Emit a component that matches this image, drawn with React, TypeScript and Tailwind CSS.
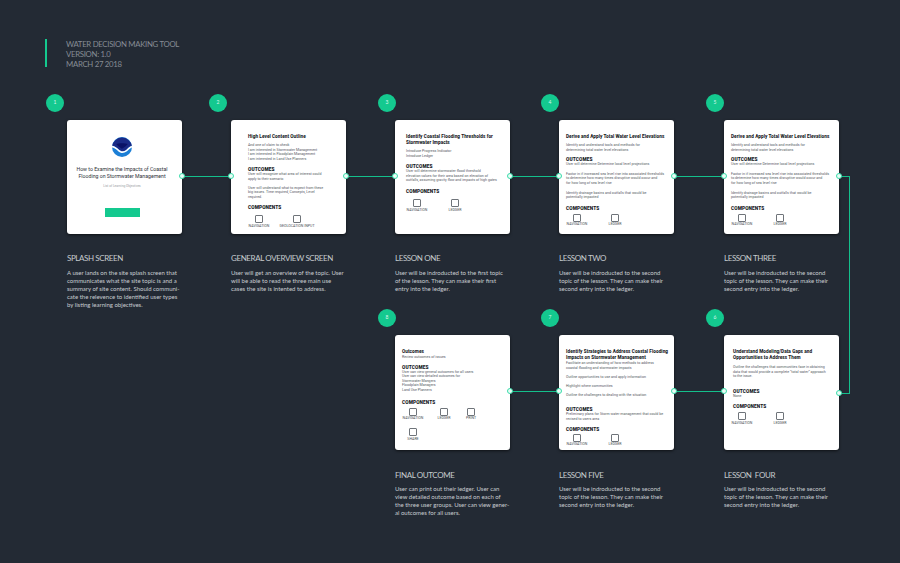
import type { ReactNode } from "react";

const cardFont = { fontFamily: '"Roboto", "Liberation Sans", sans-serif' };

function CardTitle({ children }: { children: ReactNode }) {
  return (
    <h3 className="text-[4.7px] leading-[6px] font-extrabold tracking-[0.05px] whitespace-nowrap text-[#15181d]">
      {children}
    </h3>
  );
}

function CardHead({ children, className = "" }: { children: ReactNode; className?: string }) {
  return (
    <h4 className={`text-[4.8px] leading-[5px] font-black tracking-[0.1px] text-[#15181d] ${className}`}>
      {children}
    </h4>
  );
}

function CardText({ children, className = "" }: { children: ReactNode; className?: string }) {
  return <p className={`text-[3.6px] leading-[4.6px] whitespace-nowrap text-[#55595f] ${className}`}>{children}</p>;
}

function Part({ label, className = "" }: { label: string; className?: string }) {
  return (
    <div className={`flex w-[22px] flex-col items-center ${className}`}>
      <div className="h-[8px] w-[8px] rounded-[1px] border-[0.5px] border-[#6f747a] bg-white" />
      <span className="mt-[1.5px] text-[3.6px] leading-[3px] whitespace-nowrap text-[#4b4f55]">{label}</span>
    </div>
  );
}

function Parts({ labels, className = "" }: { labels: string[]; className?: string }) {
  return (
    <div className={`flex gap-x-[16px] ${className}`}>
      {labels.map((l) => (
        <Part key={l} label={l} />
      ))}
    </div>
  );
}

function NoaaLogo() {
  return (
    <svg viewBox="0 0 24 24" className="h-[20px] w-[20px]">
      <circle cx="12" cy="12" r="12" fill="#1c7fd6" />
      <path d="M.2 10.500A12 12 0 0 1 23.800 10.500C21 11.500 19 13.500 17 15.500c-3 2.500-6.500 2-9-.5C6 13 3.500 11 .2 10.500z" fill="#1a2a86" />
      <path d="M5 8.500c3-1.500 11-1.500 14 0-2 2-3.500 4-7 5.500-3.500-1.500-5-3.500-7-5.500z" fill="#0a1266" />
      <path d="M.2 10.500C3.500 11 6 13 8 15c2.500 2.500 6 3 9 .5 2-2 4-4 6.800-5 .2 1 .2 1.500.2 2-2.500 1-4.500 3-6.500 5-3.500 2.500-7.500 2-10-.5-2-2-4-4-7.500-4.500 0-.7 0-1.500.2-2.500z" fill="#fff" />
    </svg>
  );
}

type Step = {
  n: number;
  title: string;
  desc: string;
  card: ReactNode;
  badge: string;
  next?: boolean;
  left?: boolean;
};

const totalWater = (
  <div className="px-[7px] pt-[14px]">
    <CardTitle>Derive and Apply Total Water Level Elevations</CardTitle>
    <CardText className="mt-[3px]">
      Identify and understand tools and methods for
      <br />
      determining total water level elevations
    </CardText>
    <CardHead className="mt-[5px]">OUTCOMES</CardHead>
    <CardText>User will determine Determine local level projections</CardText>
    <CardText className="mt-[5px]">
      Factor in if increased sea level rise into associated thresholds
      <br />
      to determine how many times disruptive would occur and
      <br />
      for how long of sea level rise
    </CardText>
    <CardText className="mt-[5px]">
      Identify drainage basins and outfalls that would be
      <br />
      potentially impacted
    </CardText>
    <CardHead className="mt-[6px]">COMPONENTS</CardHead>
    <Parts labels={["NAVIGATION", "LEDGER"]} className="mt-[3px]" />
  </div>
);

const steps: Step[] = [
  {
    n: 1,
    badge: "-ml-[21px]",
    title: "SPLASH SCREEN",
    desc: "A user lands on the site splash screen that\ncommunicates what the site topic is and a\nsummary of site content. Should communi-\ncate the relevence to identified user types\nby listing learning objectives.",
    next: true,
    card: (
      <div className="flex h-full flex-col items-center pt-[17px] pr-[5px]">
        <NoaaLogo />
        <p className="mt-[9px] text-center text-[5.2px] leading-[6.6px] text-[#30343a]">
          How to Examine the Impacts of Coastal
          <br />
          Flooding on Stormwater Management
        </p>
        <p className="mt-[5px] text-[3.2px] leading-[4px] text-[#9a9ea3]">List of Learning Objectives</p>
        <div className="mt-[20px] h-[9px] w-[35px] bg-[#14c98f]" />
      </div>
    ),
  },
  {
    n: 2,
    badge: "-ml-[22px]",
    title: "GENERAL OVERVIEW SCREEN",
    desc: "User will get an overview of the topic. User\nwill be able to read the three main use\ncases the site is intented to address.",
    next: true,
    left: true,
    card: (
      <div className="px-[17px] pt-[14px]">
        <CardTitle>High Level Content Outline</CardTitle>
        <CardText className="mt-[3px]">
          And one of claim to check
          <br />
          I am interested in Stormwater Management
          <br />
          I am interested in Floodplain Management
          <br />I am interested in Land Use Planners
        </CardText>
        <CardHead className="mt-[6px]">OUTCOMES</CardHead>
        <CardText>
          User will recognize what area of interest could
          <br />
          apply to their scenario
        </CardText>
        <CardText className="mt-[4px]">
          User will understand what to expect from these
          <br />
          big issues. Time required, Concepts, Level
          <br />
          required.
        </CardText>
        <CardHead className="mt-[6px]">COMPONENTS</CardHead>
        <div className="mt-[5px] flex gap-x-[16px]">
          <Part label="NAVIGATION" />
          <Part label="GEOLOCATION INPUT" />
        </div>
      </div>
    ),
  },
  {
    n: 3,
    badge: "-ml-[17px]",
    title: "LESSON ONE",
    desc: "User will be indroducted to the first topic\nof the lesson. They can make their first\nentry into the ledger.",
    next: true,
    left: true,
    card: (
      <div className="px-[11px] pt-[14px]">
        <CardTitle>
          Identify Coastal Flooding Thresholds for
          <br />
          Stormwater Impacts
        </CardTitle>
        <CardText className="mt-[3px]">
          Introduce Progress Indicator
          <br />
          Introduce Ledger
        </CardText>
        <CardHead className="mt-[6px]">OUTCOMES</CardHead>
        <CardText>
          User will determine stormwater flood threshold
          <br />
          elevation values for their area based on elevation of
          <br />
          outfalls, assuming gravity flow and impacts of high gates
        </CardText>
        <CardHead className="mt-[6px]">COMPONENTS</CardHead>
        <Parts labels={["NAVIGATION", "LEDGER"]} className="mt-[5.500px]" />
      </div>
    ),
  },
  {
    n: 4,
    badge: "-ml-[18px]",
    title: "LESSON TWO",
    desc: "User will be indroducted to the second\ntopic of the lesson. They can make their\nsecond entry into the ledger.",
    next: true,
    left: true,
    card: totalWater,
  },
  {
    n: 5,
    badge: "-ml-[18px]",
    title: "LESSON THREE",
    desc: "User will be indroducted to the second\ntopic of the lesson. They can make their\nsecond entry into the ledger.",
    left: true,
    card: totalWater,
  },
];

const stepsBottom: Step[] = [
  {
    n: 8,
    badge: "-ml-[17px]",
    title: "FINAL OUTCOME",
    desc: "User can print out their ledger. User can\nview detailed outcome based on each of\nthe three user groups. User can view gener-\nal outcomes for all users.",
    next: true,
    card: (
      <div className="px-[7px] pt-[14px]">
        <CardTitle>Outcomes</CardTitle>
        <CardText>Review outcomes of issues</CardText>
        <CardHead className="mt-[5px]">OUTCOMES</CardHead>
        <CardText>
          User can view general outcomes for all users
          <br />
          User can view detailed outcomes for
          <br />
          Stormwater Mangers
          <br />
          Floodplain Managers
          <br />
          Land Use Planners
        </CardText>
        <CardHead className="mt-[7px]">COMPONENTS</CardHead>
        <div className="mt-[3px] flex flex-wrap gap-y-[8px]">
          <Part label="NAVIGATION" />
          <Part label="LEDGER" className="ml-[9px]" />
          <Part label="PRINT" className="ml-[5px]" />
          <Part label="SHARE" />
        </div>
      </div>
    ),
  },
  {
    n: 7,
    badge: "-ml-[18px]",
    title: "LESSON FIVE",
    desc: "User will be indroducted to the second\ntopic of the lesson. They can make their\nsecond entry into the ledger.",
    next: true,
    left: true,
    card: (
      <div className="px-[7px] pt-[14px]">
        <CardTitle>
          Identify Strategies to Address Coastal Flooding
          <br />
          Impacts on Stormwater Management
        </CardTitle>
        <CardText>
          Facilitate an understanding of how methods to address
          <br />
          coastal flooding and stormwater impacts
        </CardText>
        <CardText className="mt-[4.500px]">Outline opportunities to use and apply information</CardText>
        <CardText className="mt-[4.500px]">Highlight where communities</CardText>
        <CardText className="mt-[4.500px]">Outline the challenges to dealing with the situation</CardText>
        <CardHead className="mt-[10px]">OUTCOMES</CardHead>
        <CardText>
          Preliminary plans for Storm water management that could be
          <br />
          revised to users area
        </CardText>
        <CardHead className="mt-[5px]">COMPONENTS</CardHead>
        <Parts labels={["NAVIGATION", "LEDGER"]} className="mt-[2px]" />
      </div>
    ),
  },
  {
    n: 6,
    badge: "-ml-[18px]",
    title: "LESSON  FOUR",
    desc: "User will be indroducted to the second\ntopic of the lesson. They can make their\nsecond entry into the ledger.",
    left: true,
    card: (
      <div className="px-[9px] pt-[14px]">
        <CardTitle>
          Understand Modeling/Data Gaps and
          <br />
          Opportunities to Address Them
        </CardTitle>
        <CardText className="mt-[4px]">
          Outline the challenges that communities face in obtaining
          <br />
          data that would provide a complete “total water” approach
          <br />
          to the issue.
        </CardText>
        <CardHead className="mt-[10px]">OUTCOMES</CardHead>
        <CardText>None</CardText>
        <CardHead className="mt-[6px]">COMPONENTS</CardHead>
        <Parts labels={["NAVIGATION", "LEDGER"]} className="-ml-[2px] mt-[3px]" />
      </div>
    ),
  },
];

function Dot({ className }: { className: string }) {
  return (
    <span
      className={`absolute z-10 h-[6px] w-[6px] rounded-full border border-[#3adcaa] bg-[#eafcf6] ${className}`}
    />
  );
}

function StepBlock({ step, lower = false }: { step: Step; lower?: boolean }) {
  return (
    <div className="w-[115px]">
      <div
        className={`${step.badge} flex h-[18px] w-[18px] items-center justify-center rounded-full bg-[#14c98f] text-[5px] text-[#d8f7ec]`}
      >
        {step.n}
      </div>
      <div
        className={`relative mt-[8px] w-[115px] rounded-[3px] bg-white shadow-[0_1px_3px_rgba(0,0,0,0.6)] ${
          lower ? "h-[115px]" : "h-[114px]"
        }`}
        style={cardFont}
      >
        {step.card}
        {step.next && (
          <span className="absolute top-[56px] left-full h-px w-[49px] bg-[#14c08c]" />
        )}
        {step.left && <Dot className="top-[53px] -left-[3px]" />}
        <Dot className={`-right-[3px] ${step.n === 6 ? "top-[55px]" : "top-[53px]"}`} />
      </div>
      <h2
        className={`text-[8px] leading-[10px] tracking-[-0.4px] whitespace-pre text-[#c6cace] ${
          lower ? "mt-[20px]" : "mt-[19px]"
        }`}
      >
        {step.title}
      </h2>
      <p
        className={`w-[118px] text-[6px] leading-[8px] whitespace-pre-line text-[#c9cdd1] ${
          lower ? "mt-[5px]" : "mt-[6px]"
        }`}
      >
        {step.desc}
      </p>
    </div>
  );
}

export default function App() {
  return (
    <div
      className="relative h-[563px] w-[900px] overflow-hidden bg-[#232a34] pt-[39px] pl-[45px]"
      style={{ fontFamily: '"Lato", "Open Sans", sans-serif' }}
    >
      {/* header */}
      <div className="flex h-[28px] gap-[19px]">
        <div className="h-full w-[2px] bg-[#14c98f]" />
        <div className="text-[7.800px] leading-[10px] tracking-[-0.3px] text-[#868c94]">
          <p>WATER DECISION MAKING TOOL</p>
          <p>VERSION: 1.0</p>
          <p>MARCH 27 2018</p>
        </div>
      </div>

      {/* flow */}
      <div className="mt-[27px] ml-[22px] grid grid-cols-[164px_164px_164px_165px_115px] auto-rows-[215px]">
        {steps.map((s) => (
          <StepBlock key={s.n} step={s} />
        ))}
        <div className="col-start-3">
          <StepBlock step={stepsBottom[0]} lower />
        </div>
        <StepBlock step={stepsBottom[1]} lower />
        <StepBlock step={stepsBottom[2]} lower />
      </div>

      {/* link between the rows */}
      <div className="absolute top-[176px] left-[838px] h-[218px] w-[12px] border-y border-r border-[#14c08c]" />
    </div>
  );
}
